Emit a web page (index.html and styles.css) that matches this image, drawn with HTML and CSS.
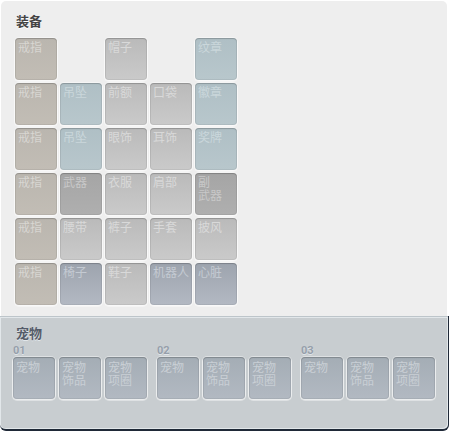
FILE: index.html
```
<!DOCTYPE html>
<html lang="zh-CN">
<head>
<meta charset="utf-8">
<title>装备</title>
<link rel="stylesheet" href="styles.css">
</head>
<body>
<main class="window">
  <section class="equip">
    <h2 class="title">装备</h2>
    <ul class="equip-grid">
      <li class="slot ring">戒指</li>
      <li class="slot col-3">帽子</li>
      <li class="slot emblem col-5">纹章</li>

      <li class="slot ring">戒指</li>
      <li class="slot emblem">吊坠</li>
      <li class="slot">前额</li>
      <li class="slot">口袋</li>
      <li class="slot emblem">徽章</li>

      <li class="slot ring">戒指</li>
      <li class="slot emblem">吊坠</li>
      <li class="slot">眼饰</li>
      <li class="slot">耳饰</li>
      <li class="slot emblem">奖牌</li>

      <li class="slot ring">戒指</li>
      <li class="slot weapon">武器</li>
      <li class="slot">衣服</li>
      <li class="slot">肩部</li>
      <li class="slot weapon">副<br>武器</li>

      <li class="slot ring">戒指</li>
      <li class="slot">腰带</li>
      <li class="slot">裤子</li>
      <li class="slot">手套</li>
      <li class="slot">披风</li>

      <li class="slot ring">戒指</li>
      <li class="slot special">椅子</li>
      <li class="slot">鞋子</li>
      <li class="slot special">机器人</li>
      <li class="slot special">心脏</li>
    </ul>
  </section>
  <section class="pets">
    <h2 class="title title-pets">宠物</h2>
    <div class="pet-groups">
      <div class="pet-group">
        <h3 class="number">01</h3>
        <ul class="pet-slots">
          <li class="slot pet">宠物</li>
          <li class="slot pet">宠物<br>饰品</li>
          <li class="slot pet">宠物<br>项圈</li>
        </ul>
      </div>
      <div class="pet-group">
        <h3 class="number">02</h3>
        <ul class="pet-slots">
          <li class="slot pet">宠物</li>
          <li class="slot pet">宠物<br>饰品</li>
          <li class="slot pet">宠物<br>项圈</li>
        </ul>
      </div>
      <div class="pet-group">
        <h3 class="number">03</h3>
        <ul class="pet-slots">
          <li class="slot pet">宠物</li>
          <li class="slot pet">宠物<br>饰品</li>
          <li class="slot pet">宠物<br>项圈</li>
        </ul>
      </div>
    </div>
  </section>
</main>
</body>
</html>
```
FILE: styles.css
```
* {
  box-sizing: border-box;
}

body {
  margin: 0;
  background: #fff;
  font-family: "Noto Sans CJK SC", sans-serif;
}

h2,
h3,
ul {
  margin: 0;
  padding: 0;
  list-style: none;
}

.window {
  padding-top: 1px;
}

.equip {
  margin: 0 2px 0 1px;
  padding: 12px 14px 11px;
  border-radius: 5px 5px 0 0;
  background: #eee;
}

.title {
  margin-bottom: 9px;
  padding-left: 1px;
  font-size: 13px;
  line-height: 16px;
  font-weight: 700;
  color: #444;
  text-shadow: 0 1px #fff;
}

.equip-grid {
  display: grid;
  grid-template-columns: repeat(5, 42px);
  gap: 3px;
}

.col-3 {
  grid-column: 3;
}

.col-5 {
  grid-column: 5;
}

.slot {
  width: 42px;
  height: 42px;
  padding: 4px 0 0 3px;
  border-radius: 4px;
  font-family: "Liberation Sans", "Noto Sans CJK SC", sans-serif;
  font-size: 12px;
  line-height: 13px;
  font-weight: 400;
  white-space: nowrap;
  color: #d9d9d9;
  background: linear-gradient(#bababa, #cacaca);
  box-shadow: inset 0 0 0 1px rgba(0, 0, 0, 0.06), inset 0 1px 1px rgba(0, 0, 0, 0.16), 0 0 0 1px rgba(255, 255, 255, 0.4), 0 1px 0 1px rgba(255, 255, 255, 0.4);
}

.ring {
  color: #d8d6d2;
  background: linear-gradient(#bab6af, #c2bdb5);
}

.emblem {
  color: #cad7db;
  background: linear-gradient(#afbfc5, #b8c7cc);
}

.weapon {
  color: #c8c8c8;
  background: linear-gradient(#a5a5a5, #afafaf);
}

.special {
  color: #c4cad2;
  background: linear-gradient(#9da4ae, #b3b9c3);
}

.pet {
  padding-top: 5px;
  color: #c9cfd5;
  background: linear-gradient(#a4adb5, #b2b9c2);
}

.pets {
  padding: 7px 12px 30px;
  border: solid #1f2937;
  border-width: 0 1px 2px 0;
  border-radius: 0 0 6px 6px;
  background: #c8cdd0;
  box-shadow: inset 0 1px #bdc5ca, inset 0 2px #e2e7ea, inset -1px -1px #e2e7ea, inset 1px 0 #e2e7ea;
}

.title-pets {
  margin: 2px 0 2px 3px;
  color: #555c69;
  text-shadow: 0 1px #e2e7ea;
}

.pet-groups {
  display: flex;
  gap: 10px;
  padding-left: 1px;
}

.number {
  height: 14px;
  font-family: Roboto, sans-serif;
  font-size: 11px;
  line-height: 15px;
  font-weight: 700;
  color: #969fab;
  text-shadow: 0 1px #e0e5e8;
}

.pet-slots {
  display: flex;
  gap: 4px;
}
```
